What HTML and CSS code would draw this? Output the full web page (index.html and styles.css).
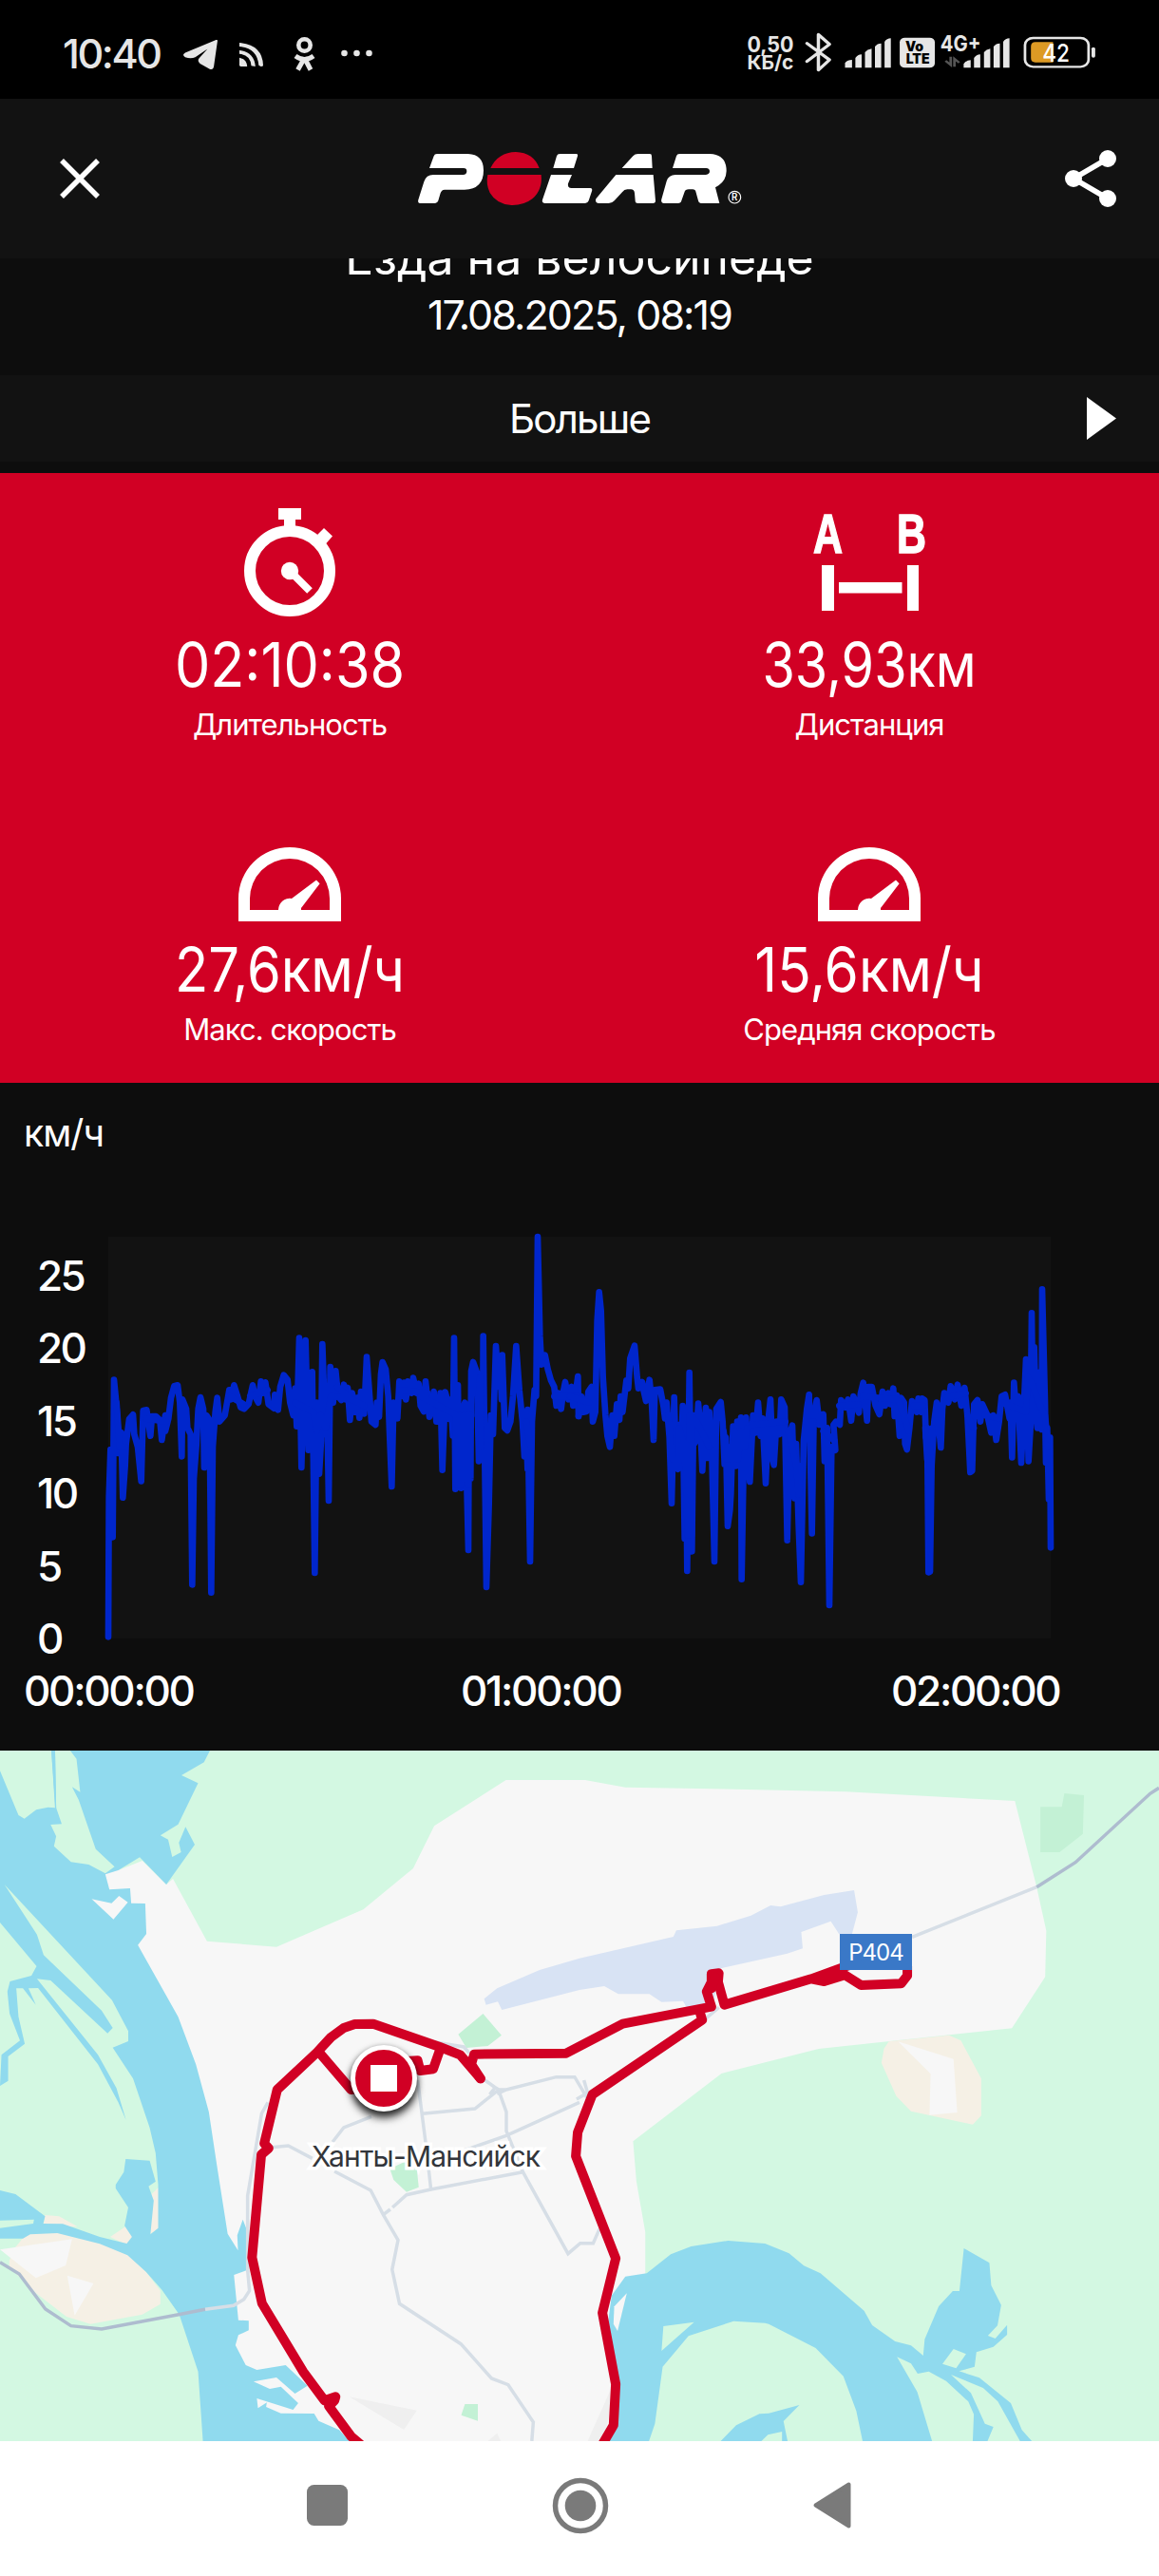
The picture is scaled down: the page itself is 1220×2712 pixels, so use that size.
FILE: index.html
```html
<!DOCTYPE html>
<html lang="ru">
<head>
<meta charset="utf-8">
<title>Polar</title>
<link rel="stylesheet" href="styles.css">
</head>
<body>
<div class="screen">
  <div class="statusbar">
    <div class="status-left">
      <span class="clock">10:40</span>
      <svg class="ic-telegram" width="36" height="31" viewBox="495 126 92 92" preserveAspectRatio="none" fill="#e6e6e6"><path d="M587 128 Q587 125 583 126 L500 166 Q490 173 500 180 Q515 186 527 180 L560 154 L537 184 Q532 192 540 200 L566 217 Q575 221 577 209Z"/></svg>
      <svg class="ic-feed" width="25" height="25" viewBox="648 134 64 75" preserveAspectRatio="none" fill="#e6e6e6"><path d="M648 134 Q710 140 712 205 Q712 209 706 209 L700 205 Q696 150 648 146Z"/><path d="M648 158 Q688 164 691 209 L680 207 Q678 172 648 169Z"/><path d="M648 181 Q668 186 669 209 L652 209 Q648 209 648 204Z"/></svg>
      <svg class="ic-ok" width="23" height="35" viewBox="0 0 23 35" fill="none" stroke="#e6e6e6"><circle cx="11.500" cy="8.500" r="6.200" stroke-width="4.600"/><path d="M2 20 Q11.500 27 21 20" stroke-width="5"/><path d="M11.500 22 L4.500 34.500 M11.500 22 L18 34.500" stroke-width="5"/></svg>
      <svg class="ic-more" width="33" height="8" viewBox="0 0 33 8" fill="#e6e6e6"><circle cx="3.500" cy="4" r="3.300"/><circle cx="16.500" cy="4" r="3.300"/><circle cx="29.500" cy="4" r="3.300"/></svg>
    </div>
    <svg class="status-right" width="369.600" height="45" viewBox="455 100 950 135" preserveAspectRatio="none">
      <g class="status-text" fill="#e6e6e6">
        <text x="456" y="165" font-size="68" textLength="126" lengthAdjust="spacingAndGlyphs">0,50</text>
        <text x="456" y="219" font-size="62" textLength="126" lengthAdjust="spacingAndGlyphs">КБ/с</text>
        <text x="979" y="163" font-size="68" textLength="110" lengthAdjust="spacingAndGlyphs">4G+</text>
      </g>
      <path d="M618 138 L679 190 L649 222 V110 L679 141 L618 195" fill="none" stroke="#e6e6e6" stroke-width="9" stroke-linejoin="round" stroke-linecap="round"/>
      <g fill="#e6e6e6">
        <path d="M721 215 V200 Q728 190 740 190 V215Z M749 215 V184 Q755 174 766 173 V215Z M775 215 V166 Q781 157 793 155 V215Z M802 215 V148 Q808 138 819 138 V215Z M828 215 V133 Q834 122 845 122 V215Z"/>
        <path d="M1042 215 V203 Q1049 191 1061 191 V215Z M1070 215 V184 Q1076 174 1087 173 V215Z M1097 215 V166 Q1103 157 1114 155 V215Z M1123 215 V148 Q1129 138 1140 138 V215Z M1149 215 V133 Q1155 122 1166 122 V215Z"/>
        <rect x="869" y="120" width="95" height="95" rx="14"/>
        <rect x="1388" y="150" width="10" height="33" rx="5"/>
      </g>
      <path d="M1007 180 V206 L993 193 M1017 212 V187 L1030 199" stroke="#555" stroke-width="7" fill="none"/>
      <g class="volte" fill="#000"><text x="884" y="163" font-size="42" textLength="49" lengthAdjust="spacingAndGlyphs">Vo</text><text x="886" y="203" font-size="42" textLength="64" lengthAdjust="spacingAndGlyphs">LTE</text></g>
      <rect x="1208" y="121" width="172" height="91" rx="22" fill="none" stroke="#e6e6e6" stroke-width="7"/>
      <path d="M1284 134 H1236 Q1224 134 1224 148 V184 Q1224 198 1236 198 H1284Z" fill="#dd9a24"/>
      <text class="battery" x="1255" y="195" font-size="77" fill="#fff" textLength="74" lengthAdjust="spacingAndGlyphs">42</text>
    </svg>
  </div>

  <header class="appbar">
    <svg class="close" width="42" height="42" viewBox="0 0 42 42"><path d="M2 2 L40 40 M40 2 L2 40" stroke="#fff" stroke-width="5.500"/></svg>
    <svg class="logo" width="360" height="80" viewBox="0 0 1080 240" fill="#fff">
      <path d="M80 43 Q82 36 90 36 H188 Q237 38 237 88 Q237 148 177 149 H114 Q104 150 101 160 L94 184 Q91 192 84 192 H37 Q28 192 31 181 L49 124 Q56 102 78 102 H172 Q184 102 184 91 Q184 81 174 81 H66Z"/>
      <path fill="#d10024" d="M259 81 Q283 31 339 30 Q395 32 413 81Z M250 102 H419 Q424 150 391 178 Q364 199 325 198 Q279 196 257 159 Q244 132 250 102Z"/>
      <path d="M457 81 L468 43 Q470 36 478 36 H529 Q536 36 534 43 L522 81Z M450 102 H516 L504 130 Q501 144 515 144 H574 Q582 145 579 154 L569 184 Q566 192 558 192 H430 Q420 191 423 181Z"/>
      <path d="M674 81 L709 43 Q715 36 725 36 H762 Q768 36 768 43 L770 81Z M655 102 H773 L780 184 Q780 192 772 192 H724 Q716 192 716 184 L714 160 Q713 148 702 148 H691 Q681 148 675 157 L650 184 Q643 192 632 192 H600 Q588 190 592 178Z"/>
      <path d="M834 81 L846 43 Q848 36 856 36 H952 Q1004 38 1004 90 Q1004 123 969 142 L982 192 H923 Q916 192 915 184 L908 158 Q906 148 897 148 H885 Q874 148 871 158 L862 184 Q860 192 851 192 H807 Q796 191 799 179 L815 122 Q822 102 843 102 H939 Q951 101 951 91 Q951 82 940 81Z"/>
      <circle cx="1030" cy="173" r="19" fill="none" stroke="#fff" stroke-width="3.500"/>
      <text class="reg" x="1020" y="184" font-size="29">R</text>
    </svg>
    <svg class="share" width="54" height="60" viewBox="0 0 54 60"><path d="M45 9 L9 30 L45 51" fill="none" stroke="#fff" stroke-width="5.500"/><g fill="#fff"><circle cx="45" cy="9" r="9"/><circle cx="9" cy="30" r="9"/><circle cx="45" cy="51" r="9"/></g></svg>
  </header>

  <section class="summary">
    <h1 class="sport">Езда на велосипеде</h1>
    <p class="date">17.08.2025, 08:19</p>
  </section>
  <div class="more">
    <span>Больше</span>
    <svg class="play" width="31" height="53" viewBox="0 0 31 53"><path d="M0 4 L31 26.500 L0 49Z" fill="#fff"/></svg>
  </div>

  <section class="stats">
    <div class="stat">
      <div class="stat-icon"><svg width="96" height="114" viewBox="0 0 96 114" fill="#fff"><circle cx="48" cy="66" r="42" fill="none" stroke="#fff" stroke-width="12"/><path d="M36 0 H60 V12 H54 V22 H42 V12 H36Z M84 21 L93 29.500 L86 37.600 L77 28Z"/><circle cx="48" cy="66" r="9.200"/><path d="M48 66 L69 87" stroke="#fff" stroke-width="8"/></svg></div>
      <div class="value v-time">02:10:38</div><div class="label">Длительность</div>
    </div>
    <div class="stat">
      <div class="stat-icon ab"><svg width="121" height="102" viewBox="0 0 121 102" fill="#fff"><text class="ab-text" x="1" y="41" font-size="58" textLength="31" lengthAdjust="spacingAndGlyphs">A</text><text class="ab-text" x="89" y="41" font-size="58" textLength="31" lengthAdjust="spacingAndGlyphs">B</text><path d="M10 54 H23 V102 H10Z M100 54 H112 V102 H100Z M28 72 H94.500 V83.500 H28Z"/></svg></div>
      <div class="value v-dist">33,93км</div><div class="label">Дистанция</div>
    </div>
    <div class="stat">
      <div class="stat-icon"><svg width="108" height="78" viewBox="0 0 108 78" fill="#fff"><path fill-rule="evenodd" d="M0 78 V54 A54 54 0 0 1 108 54 V78Z M12 66 H42 A12 12 0 0 1 56 54 L82 34.500 L85.600 38.200 L66 64 V66 H96 V54 A42 42 0 0 0 12 54Z"/></svg></div>
      <div class="value v-max">27,6км/ч</div><div class="label">Макс. скорость</div>
    </div>
    <div class="stat">
      <div class="stat-icon"><svg width="108" height="78" viewBox="0 0 108 78" fill="#fff"><path fill-rule="evenodd" d="M0 78 V54 A54 54 0 0 1 108 54 V78Z M12 66 H42 A12 12 0 0 1 56 54 L82 34.500 L85.600 38.200 L66 64 V66 H96 V54 A42 42 0 0 0 12 54Z"/></svg></div>
      <div class="value v-avg">15,6км/ч</div><div class="label">Средняя скорость</div>
    </div>
  </section>

  <section class="chart">
    <div class="unit">км/ч</div>
    <div class="plot-row">
      <div class="y-axis"><span>25</span><span>20</span><span>15</span><span>10</span><span>5</span><span>0</span></div>
      <svg class="plot" width="992" height="423" viewBox="42 36 2976 1269" fill="none" stroke="#0026cc" stroke-width="20" stroke-linecap="round" stroke-linejoin="round">
        <path d="M42 1300 L44 860 49 708 56 985 60 488 66 550 70 600 75 720 83 655 88 860 95 760 98 690 108 612 120 598 124 660 135 700 146 808 152 585 163 583 175 665 180 603 192 603 205 615 211 678 222 600 222 650 232 610 240 545 250 508 261 505 268 560 274 730 276 550 288 580 292 640 302 660 307 1135 312 800 320 695 326 580 333 543 342 580 345 765 352 600 362 615 367 1160 372 700 380 590 386 545 393 620 410 600 424 520 430 550 439 505 450 540 460 575 471 580 485 565 498 505 505 540 516 560 524 493 530 530 538 496 548 565 565 578 568 535 578 583 585 510 596 473 608 488 616 560 626 600 632 515 637 635 645 356 652 765 658 500 665 363 674 710 686 463 694 1098 700 560 708 785 714 680 718 375 728 660 732 520 738 870 743 447 752 560 760 460 768 540 778 552 786 503 792 550 798 513 805 615 812 530 822 590 828 545 835 608 840 525 850 595 858 416 868 550 873 620 886 630 890 560 897 605 903 470 908 432 918 455 926 540 930 650 937 825 943 560 955 610 961 493 973 540 976 497 982 550 988 493 1000 530 1005 482 1015 530 1022 500 1028 570 1038 588 1044 493 1056 605 1070 525 1078 620 1088 620 1091 530 1097 773 1106 527 1112 550 1118 612 1124 550 1130 665 1134 356 1138 833 1146 505 1150 780 1156 830 1162 580 1168 560 1179 1026 1181 600 1186 800 1188 460 1194 432 1206 465 1212 745 1219 600 1224 710 1226 350 1236 1143 1244 880 1250 600 1257 660 1266 381 1275 510 1280 430 1284 550 1286 410 1294 640 1302 648 1312 620 1320 540 1330 381 1340 520 1350 620 1356 730 1362 640 1366 770 1366 582 1374 1062 1380 620 1388 520 1393 540 1398 36 1405 350 1410 440 1421 410 1430 455 1440 490 1450 510 1457 570 1463 530 1472 580 1478 530 1485 495 1495 550 1505 510 1510 570 1517 540 1525 477 1527 603"/>
        <path d="M68 560 L78 700 95 700 M160 610 L225 620 M425 540 L470 565 M490 540 L545 520 M632 560 L690 590 700 650 712 600 728 640 745 540 800 545 850 570 M765 510 L800 540 M965 520 L1050 530 M1028 540 L1125 590 1140 600 1142 820 1152 600 1154 820 1164 600 1168 800 1176 600 1178 820 1186 600 M1208 600 L1216 480 1220 700 M1362 620 L1376 700 M1402 430 L1425 440 M1450 540 L1527 540"/>
        <path transform="translate(1500)" d="M27 603 L36 540 42 590 52 588 58 525 68 510 72 620 80 590 86 300 92 211 98 270 104 480 112 600 118 665 126 700 134 600 140 665 148 565 156 615 160 540 166 590 178 490 184 515 190 420 204 380 212 480 216 515 228 495 232 520 240 555 251 488 258 560 264 678 268 520 285 518 295 570 300 610 305 560 314 670 321 878 329 543 335 760 341 770 344 630 350 750 356 570 362 990 366 650 370 1092 377 465 385 1030 390 600 392 690 398 680 405 563 412 640 418 775 424 640 429 576 433 735 440 590 448 720 456 1062 462 580 476 558 482 620 488 755 492 670 498 950 505 900 508 850 515 635 524 760 528 620 534 740 540 607 542 1118 550 650 556 607 562 720 568 810 578 600 586 655 594 560 602 665 608 610 618 815 626 615 633 550 640 740 644 757 652 620 662 660 667 550 678 575 686 995 694 660 702 632 709 862 714 690 722 950 729 1127 738 680 748 580 755 535 764 973 770 600 779 552 788 630 800 597 804 745 812 640 819 1200 826 700 838 710 832 630 840 620 852 630 856 552 870 575 878 550 888 617 895 540 912 592 918 530 926 497 938 617 942 510 953 510 965 570 977 597 987 525 995 570 1005 530 1012 565 1021 515 1025 603 1032 537 1041 665 1045 545 1055 560 1058 690 1064 708 1072 640 1080 555 1095 590 1100 547 1108 590 1112 547 1120 552 1124 670 1128 640 1132 1096 1137 1094 1142 760 1150 620 1158 560 1171 702 1176 580 1182 530 1195 560 1202 508 1215 550 1224 503 1236 570 1246 513 1255 600 1264 780 1270 775 1276 565 1287 552 1296 620 1302 565 1318 600 1330 655 1337 600 1346 678 1355 620 1363 540 1374 535 1388 610 1391 560 1396 733 1402 497 1410 608 1415 540 1425 750 1432 600 1440 423 1448 745 1454 640 1458 277 1462 600 1466 385 1472 610 1476 640 1480 465 1490 645 1491 202 1500 560 1503 750 1507 640 1512 865 1516 670 1518 1018"/>
        <path transform="translate(1500)" d="M0 540 L60 560 M310 600 L325 740 345 740 345 640 362 700 372 980 378 600 384 980 385 600 395 620 M400 620 L440 700 M485 650 L495 740 505 700 512 740 520 650 530 740 540 650 552 700 560 640 M575 630 L680 620 M690 650 L715 760 722 850 728 760 M745 620 L770 620 M800 650 L835 680 M850 570 L910 565 M925 540 L1030 550 M1040 560 L1070 650 M1085 570 L1115 570 M1122 640 L1128 740 1135 740 1145 640 M1185 545 L1250 530 M1255 600 L1275 640 M1310 600 L1355 610 M1365 560 L1440 590 1445 480 1460 500 1480 560 1500 600 1510 700"/>
      </svg>
    </div>
    <div class="x-axis"><span>00:00:00</span><span>01:00:00</span><span>02:00:00</span></div>
  </section>

  <section class="map">
    <svg width="1220" height="727" viewBox="0 9 3136 2181" preserveAspectRatio="none">
      <!-- city ground -->
      <path fill="#f7f7f7" d="M290 378 L307 377 320 387 385 357 450 432 468 414 560 611 748 629 983 511 1118 381 1175 247 1369 102 1583 102 1692 125 2020 132 2290 139 2746 168 2805 440 2831 578 2828 724 2738 886 2215 951 1952 1029 1713 1243 1722 1370 1746 1530 1746 1700 1700 2200 610 2200 600 1900 560 1650 500 1300 460 1100 400 850 330 600 270 450Z"/>
      <!-- sand -->
      <path fill="#f5f0e5" d="M75 1530 L155 1523 270 1557 345 1600 395 1655 434 1715 434 1757 385 1790 245 1820 180 1797 100 1725 25 1640 25 1620 40 1580Z M117 1510 L122 1476 160 1480 210 1513Z M343 1510 L298 1545 343 1570 360 1545Z M429 1388 L410 1410 400 1540 429 1520Z M2405 928 L2568 908 2600 925 2655 1045 2655 1162 2632 1190 2465 1148 2425 1100 2385 995 2392 950Z"/>
      <path fill="#f7f7f7" d="M0 1585 L195 1552 178 1635 97 1675Z M182 1667 L253 1692 202 1793Z M2430 928 L2580 983 2590 1152 2515 1160 2518 1030Z"/>
      <!-- airport and parks -->
      <path fill="#d8e3f4" d="M1310 793 L1345 760 1460 702 1568 665 1822 597 1830 577 1940 563 2032 530 2085 498 2112 502 2230 465 2311 450 2321 520 2305 590 2270 588 2248 548 2168 582 2172 634 2130 650 1945 698 1930 820 1857 818 1848 800 1790 803 1757 778 1673 778 1635 753 1568 765 1358 828 1347 802 1315 812Z"/>
      <path fill="#c3f1d5" d="M1307 840 L1357 908 1320 942 1262 948 1240 905Z M1055 1330 L1100 1305 1127 1320 1133 1388 1100 1403 1065 1365Z M1258 2073 H1293 V2126 L1248 2108Z M2815 187 H2873 L2880 144 2933 150 2930 272 2867 330 H2815Z"/>
      <path fill="#efefef" d="M945 2050 L1128 2093 1093 2154Z M1320 2190 L1345 2165 1355 2190Z M1590 2190 L1653 2025 1650 2100 1632 2190Z"/>
      <!-- western river -->
      <path fill="#90daee" d="M568 9 L552 46 491 87 536 112 482 242 434 277 455 290 466 345 490 330 484 300 502 250 527 306 450 432 378 346 320 387 285 400 296 448 352 444 355 491 393 492 396 588 373 623 482 850 530 1000 565 1150 587 1320 616 1535 644 1588 642 1540 657 1490 672 1535 668 1650 633 1665 645 1808 673 1810 673 1840 645 1855 637 1887 665 1950 695 1965 773 1950 832 2015 798 2040 748 1989 686 2002 730 2025 760 2018 807 2070 793 2091 695 2055 698 2086 722 2068 720 2082 760 2102 850 2103 862 2126 918 2155 945 2190 549 2190 536 1970 485 1790 438 1712 395 1655 345 1603 270 1567 155 1533 82 1537 62 1550 0 1550 0 1517 90 1503 92 1490 0 1493 0 1398 42 1410 122 1480 117 1503 170 1504 270 1545 343 1566 357 1545 337 1510 347 1452 313 1392 313 1380 335 1340 340 1299 405 1304 421 1370 402 1385 416 1430 407 1537 428 1517 428 1380 421 1280 405 1200 360 1045 305 947 347 927 347 895 303 797 12 432 100 590 118 655 275 830 305 885 291 902 137 735 100 730 265 970 315 1075 341 1176 320 1120 265 1000 103 759 77 760 97 812 62 760 44 760 50 850 67 935 22 975 22 1052 0 1068 4 970 54 925 26 840 20 770 27 738 85 720 99 690 0 552 0 9Z"/>
      <path fill="#d3f8e2" d="M0 73 L50 213 66 224 98 196 130 188 150 190 139 9 0 9Z M149 9 H190 L207 35 217 140 195 124 213 165 259 320 310 376 285 397 240 369 192 361 146 311 152 280 137 243 167 241 152 190Z"/>
      <path fill="#90daee" d="M139 9 H149 L152 192 H149Z"/>
      <path fill="#f7f7f7" d="M248 478 L302 491 322 468 346 488 307 542Z"/>
      <!-- eastern river -->
      <path fill="#90daee" d="M1692 1670 L1750 1660 1815 1600 1870 1575 1970 1557 2070 1566 2135 1597 2175 1636 2220 1660 2338 1778 2360 1824 2422 1875 2465 1888 2498 1920 2502 1868 2540 1764 2578 1716 2596 1716 2608 1581 2677 1627 2682 1698 2709 1760 2699 1825 2673 1857 2693 1866 2725 1823 2725 1854 2688 1892 2642 1909 2637 1955 2595 1969 2650 1990 2735 2070 2765 2155 2792 2190 2760 2190 2700 2065 2660 2022 2573 1980 2627 2038 2665 2135 2688 2145 2672 2190 2632 2190 2635 2105 2620 2065 2560 2000 2513 1970 2483 1977 2465 1945 2427 1924 2482 2035 2522 2190 2334 2190 2317 2095 2282 1985 2207 1896 2080 1820 2070 1817 1985 1811 1863 1858 1793 1955 1772 2135 1756 2190 1640 2190 1665 2130 1670 2020 1640 1860 1655 1730Z M1950 2190 L1992 2140 2055 2104 2080 2102 2163 2076 2120 2127 2131 2190 2116 2190 2116 2160 2078 2170 2060 2190Z"/>
      <path fill="#d3f8e2" d="M1795 1827 L1878 1814 1790 1905Z M2550 1946 L2580 1899 2614 1915 2587 1960Z"/>
      <path fill="#f7f7f7" d="M1696 1723 L1662 1765 1660 1820 1671 1842Z"/>
      <!-- roads -->
      <g class="road">
        <path d="M1150 925 L1255 945 1270 965 M1300 1040 L1340 1073 1350 1080 1370 1080 1505 1040 1555 1040 1588 1105 M1580 1050 L1590 1090 1560 1110 M1340 1073 L1325 1095 M1370 1080 L1345 1093 M1350 1080 L1285 1140 1143 1156 M1130 1050 L1152 1250 1166 1395 M1350 1085 L1370 1150 1370 1210 1415 1340 1537 1598 1570 1565 1605 1565 1622 1520 M1568 1120 L1370 1225 1260 1270 M900 1245 L930 1200 1005 1165 M735 1262 L780 1257 845 1297 M905 1338 L1003 1398 1037 1475 1077 1555 1061 1648 1081 1756 1247 1883 1330 1992 1375 2012 1443 2130 1439 2190 M1037 1475 L1056 1458 M1062 1452 L1100 1412 1166 1395 1415 1340 M725 1120 L708 1155 670 1415 670 1650 675 1715 660 1742 632 1762 555 1774 M1900 865 L1945 820 M2468 598 L2805 440"/>
        <path class="highway" d="M0 1625 L52 1662 123 1773 192 1826 275 1836 480 1791 555 1774 M2805 440 L2910 362 3112 145 3136 127"/>
      </g>
      <!-- ride track -->
      <g class="track">
        <path d="M1300 1045 L1245 970 1190 945 1010 872 960 873 930 885 895 915 858 962 750 1080 715 1250 727 1265 707 1285 682 1610 709 1755 820 1970 878 2062 908 2050 905 2062 890 2080 950 2175 975 2200"/>
        <path d="M862 960 L950 1080 1060 1060 1100 990 1130 988 1137 1020 1172 1015 1190 955"/>
        <path d="M1300 1045 L1275 1000 1283 968 1532 965 1685 872 1925 818 1912 770 1925 740 1925 715 1945 712 1943 740 1960 812 2195 730 2290 690 2320 680 M2195 730 L2230 738 2286 718 2330 750 2438 745 2455 720 2455 690"/>
        <path d="M1895 840 L1900 860 1603 1095 1563 1215 1558 1290 1666 1613 1630 1785 1666 2010 1660 2140 1630 2200"/>
        <path d="M1925 760 L1935 725"/>
      </g>
    </svg>
    <div class="city">Ханты-Мансийск</div>
    <div class="shield">Р404</div>
    <div class="marker"><i></i></div>
  </section>

  <nav class="navbar">
    <svg width="43" height="43" viewBox="0 0 43 43"><rect width="43" height="43" rx="7.500" fill="#7a7a7a"/></svg>
    <svg width="60" height="60" viewBox="0 0 60 60"><circle cx="30" cy="30" r="26.500" fill="none" stroke="#7a7a7a" stroke-width="5.500"/><circle cx="30" cy="30" r="16.300" fill="#7a7a7a"/></svg>
    <svg width="40" height="49" viewBox="0 0 40 49"><path d="M2.500 24.500 L37.500 2.500 V46.500Z" fill="#7a7a7a" stroke="#7a7a7a" stroke-width="4" stroke-linejoin="round"/></svg>
  </nav>
</div>
</body>
</html>
```
FILE: styles.css
```css
* { box-sizing: border-box; }
body { margin: 0; background: #0d0d0d; }
svg { display: block; overflow: visible; }
.screen {
  width: 1220px;
  height: 2712px;
  overflow: hidden;
  display: flex;
  flex-direction: column;
  font-family: Inter, "Noto Sans", sans-serif;
  color: #fff;
}

/* system status bar */
.statusbar {
  height: 104px;
  background: #000;
  display: flex;
  justify-content: space-between;
  align-items: flex-start;
  padding: 33px 64px 0 66px;
}
.status-left { display: flex; color: #e6e6e6; }
.clock { width: 126.500px; font-size: 43px; line-height: 46px; font-weight: 500; letter-spacing: -2.400px; }
.ic-telegram { margin-top: 9px; }
.ic-feed { margin: 12px 0 0 23.500px; }
.ic-ok { margin: 6px 0 0 32px; }
.ic-more { margin: 19px 0 0 27px; }
.status-text { font-weight: 700; }
.volte { font-weight: 900; }
.battery { font-weight: 500; }

/* app bar */
.appbar {
  height: 168px;
  background: #121212;
  display: flex;
  align-items: flex-start;
  padding: 46px 0 0 63px;
}
.close { margin-top: 17px; }
.logo { margin-left: 325px; }
.reg { font-weight: 600; }
.share { margin: 8px 0 0 331px; }

.summary { height: 123px; overflow: hidden; text-align: center; }
.sport { margin: -30px 0 0; font-size: 50px; line-height: 58px; font-weight: 400; }
.date { margin: 3px 0 0; font-size: 43px; line-height: 56px; letter-spacing: -1.900px; }
.more {
  height: 91px;
  background: #121212;
  display: grid;
  grid-template-columns: 1fr auto 1fr;
  align-items: center;
  font-size: 42px;
  letter-spacing: -1.800px;
}
.more span { grid-column: 2; }
.play { justify-self: end; margin-right: 45px; }

/* key figures */
.stats {
  height: 642px;
  margin-top: 12px;
  background: #d10024;
  display: grid;
  grid-template-columns: 1fr 1fr;
  grid-auto-rows: 321px;
  text-align: center;
}
.stat-icon {
  height: 164px;
  display: flex;
  justify-content: center;
  align-items: flex-end;
  padding-bottom: 13px;
}
.ab { padding-bottom: 19px; }
.ab-text { font-family: "Liberation Sans", sans-serif; font-weight: 700; stroke: #fff; stroke-width: 1.500; }
.value { font-size: 64px; line-height: 76px; }
.v-time { transform: scaleX(.925); }
.v-dist { transform: scaleX(.87); }
.v-max { transform: scaleX(.903); }
.v-avg { transform: scaleX(.915); }
.label { margin-top: 6px; font-size: 31px; line-height: 38px; letter-spacing: -.95px; }

/* speed chart */
.chart { height: 703px; }
.unit { padding: 28px 0 0 25px; height: 162px; font-size: 39px; line-height: 50px; letter-spacing: -.9px; }
.plot-row { display: flex; height: 423px; }
.y-axis {
  width: 114px;
  padding: 3px 0 0 39px;
  display: flex;
  flex-direction: column;
  font-size: 44px;
  line-height: 76.400px;
  font-weight: 500;
  letter-spacing: -2.500px;
}
.plot { background: #121212; }
.x-axis {
  display: grid;
  grid-template-columns: 460px 453px auto;
  padding: 28px 0 0 25px;
  font-size: 44px;
  line-height: 54px;
  font-weight: 500;
  letter-spacing: -2.300px;
}

/* map */
.map { height: 727px; background: #d3f8e2; position: relative; overflow: hidden; }
.road path { fill: none; stroke: #d6dee6; stroke-width: 3.500; vector-effect: non-scaling-stroke; }
.road .highway { stroke: #aebccf; }
.track path { fill: none; stroke: #d10024; stroke-width: 10; stroke-linecap: round; stroke-linejoin: round; vector-effect: non-scaling-stroke; }
.city {
  position: absolute;
  left: 328px;
  top: 407px;
  font-size: 30px;
  line-height: 40px;
  letter-spacing: -.8px;
  color: #33363b;
  white-space: nowrap;
  paint-order: stroke fill;
  -webkit-text-stroke: 7px #fff;
}
.shield {
  position: absolute;
  left: 884px;
  top: 193px;
  width: 76px;
  height: 38px;
  background: #3a78c7;
  font-size: 24px;
  line-height: 40px;
  letter-spacing: -1px;
  text-align: center;
}
.marker {
  position: absolute;
  left: 369px;
  top: 310px;
  width: 70px;
  height: 70px;
  border: 5px solid #fff;
  border-radius: 50%;
  background: #d10024;
  box-shadow: 0 7px 9px rgba(0, 0, 0, .7), 0 2px 6px rgba(0, 0, 0, .5);
  display: grid;
  place-items: center;
}
.marker i { width: 28px; height: 28px; background: #fff; }

/* system navigation */
.navbar {
  height: 142px;
  background: #fff;
  display: flex;
  align-items: center;
  padding: 0 324px 7px 323px;
  justify-content: space-between;
}
```
